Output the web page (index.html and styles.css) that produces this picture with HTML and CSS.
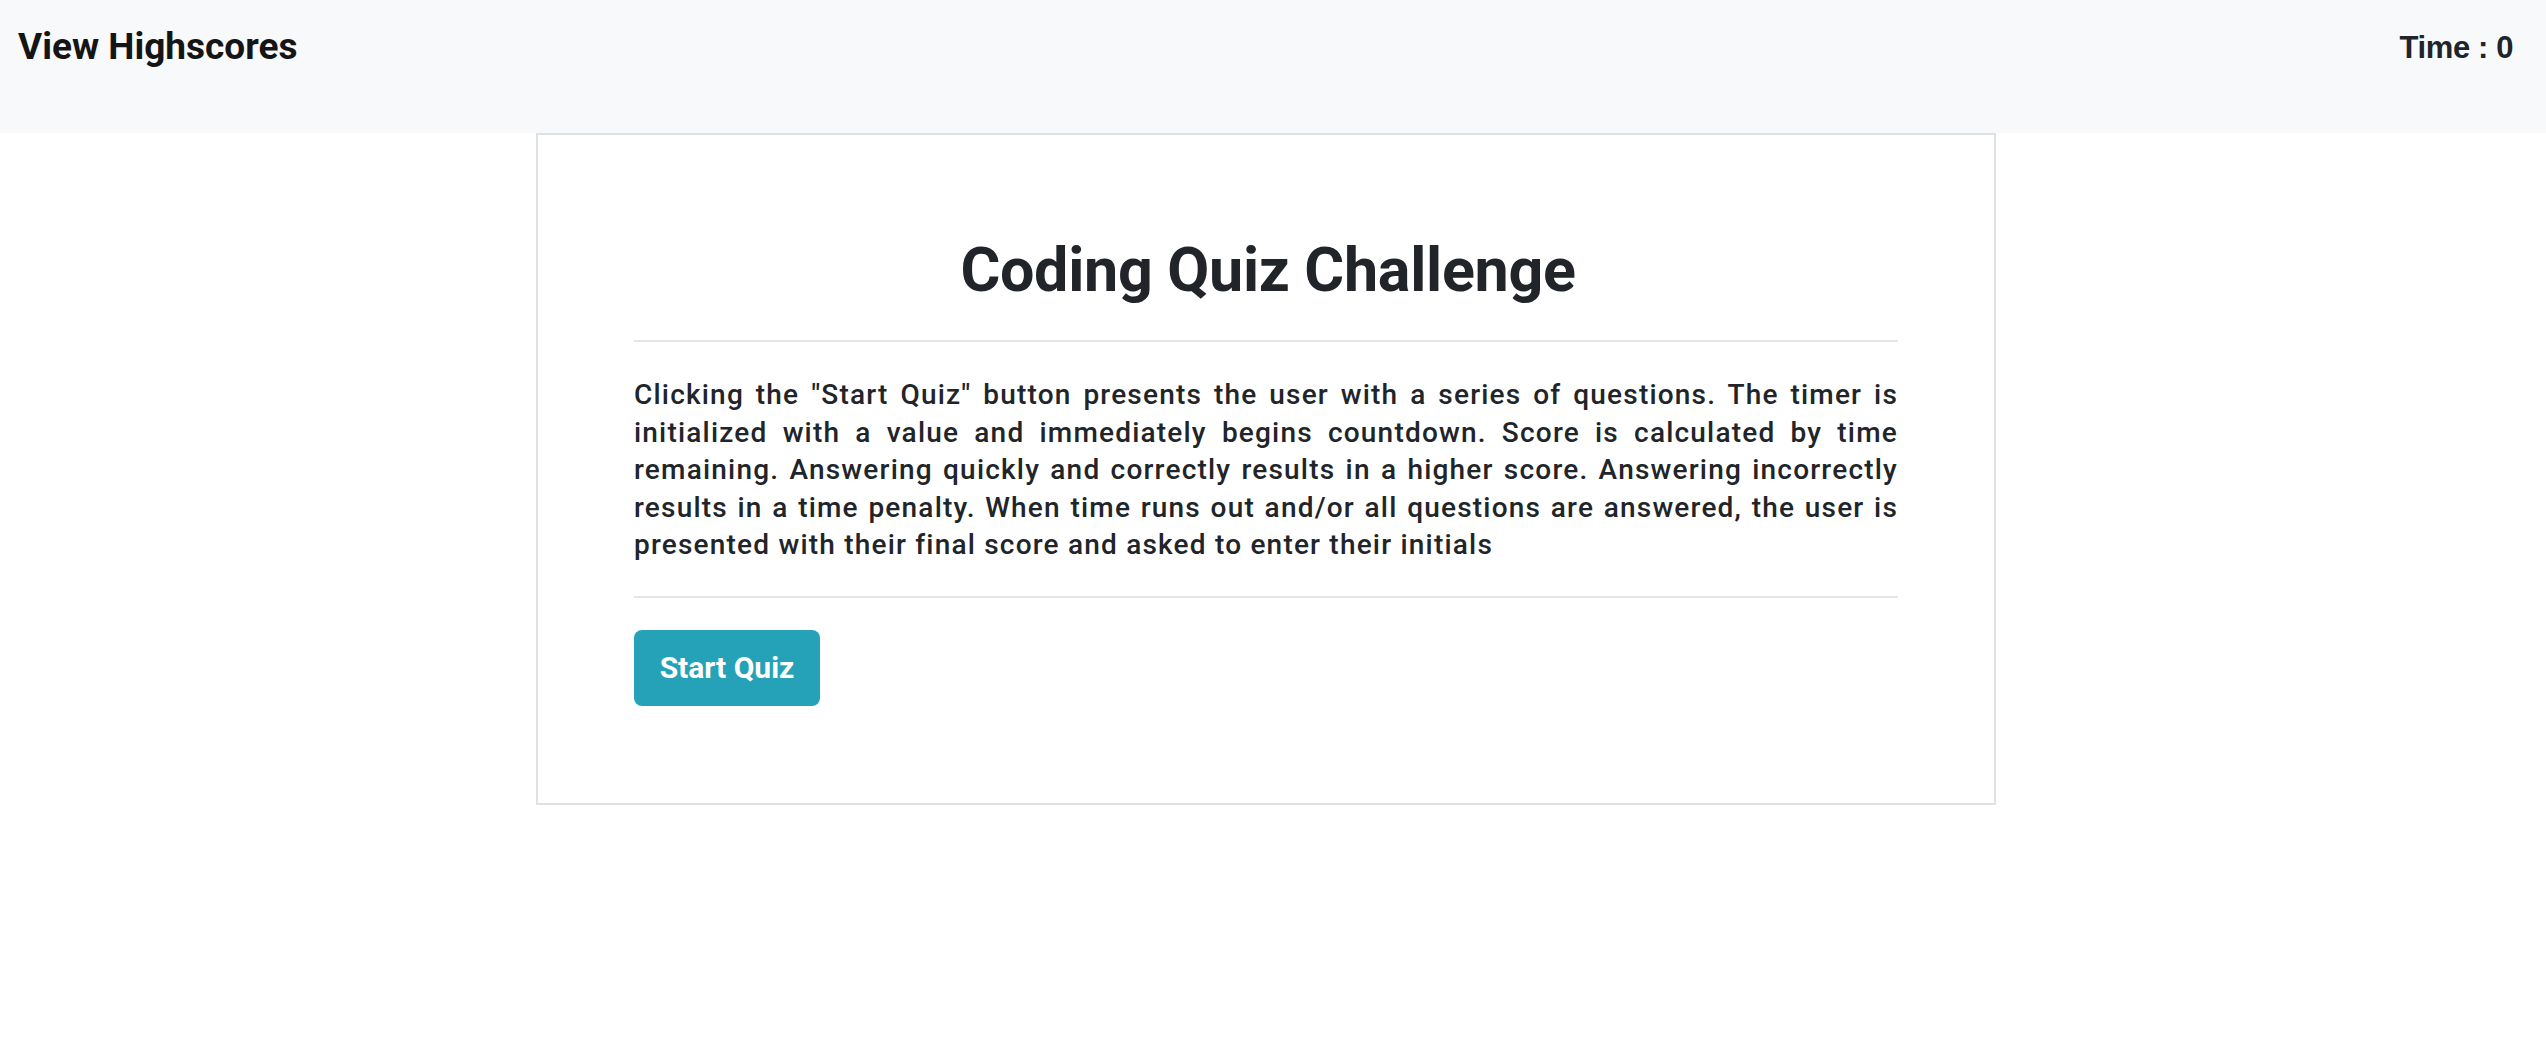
FILE: index.html
```html
<!DOCTYPE html>
<html lang="en">
<head>
<meta charset="utf-8">
<title>Coding Quiz Challenge</title>
<link rel="stylesheet" href="styles.css">
</head>
<body>
<header class="topbar">
  <a class="highscores-link" href="#">View Highscores</a>
  <div class="timer">Time : <span class="timer-value">0</span></div>
</header>
<main class="quiz-card">
  <h1 class="quiz-title">Coding Quiz Challenge</h1>
  <div class="rule"></div>
  <p class="quiz-intro">Clicking the "Start Quiz" button presents the user with a series of questions. The timer is initialized with a value and immediately begins countdown. Score is calculated by time remaining. Answering quickly and correctly results in a higher score. Answering incorrectly results in a time penalty. When time runs out and/or all questions are answered, the user is presented with their final score and asked to enter their initials</p>
  <div class="rule rule-lower"></div>
  <button class="start-btn" type="button">Start Quiz</button>
</main>
</body>
</html>
```
FILE: styles.css
```css
* { box-sizing: border-box; }

body {
  margin: 0;
  background: #ffffff;
  color: #212529;
  font-family: Roboto, "Liberation Sans", sans-serif;
}

.topbar {
  height: 133px;
  background: #f8f9fa;
  display: flex;
  justify-content: space-between;
  align-items: flex-start;
  padding: 0 33px 0 18px;
}

.highscores-link {
  margin-top: 28px;
  font-size: 37px;
  line-height: 1;
  font-weight: 700;
  letter-spacing: 0;
  color: #151515;
  text-decoration: none;
}

.timer {
  margin-top: 32px;
  font-family: "Liberation Sans", Arial, sans-serif;
  font-size: 31px;
  line-height: 1;
  font-weight: 700;
  letter-spacing: -0.4px;
  color: #212529;
}

.quiz-card {
  width: 1460px;
  margin-left: 536px;
  border: 2px solid #dee2e6;
  padding: 100px 96px 97px;
}

.quiz-title {
  margin: 0;
  font-size: 61px;
  line-height: 70px;
  font-weight: 700;
  text-align: center;
  margin-left: 4px;
  letter-spacing: -0.3px;
}

.rule {
  height: 2px;
  background: #e5e5e5;
  margin-top: 35px;
}

.quiz-intro {
  margin: 34px 0 0;
  font-size: 28px;
  line-height: 37.5px;
  font-weight: 500;
  letter-spacing: 1.2px;
  text-align: justify;
}

.rule-lower {
  margin-top: 32px;
}

.start-btn {
  margin-top: 32px;
  width: 186px;
  height: 76px;
  border: none;
  border-radius: 8px;
  background: #25a2b8;
  color: #ffffff;
  font-family: Roboto, "Liberation Sans", sans-serif;
  font-size: 30px;
  font-weight: 700;
  line-height: 1;
  padding: 0;
  display: flex;
  align-items: center;
  justify-content: center;
}
```
